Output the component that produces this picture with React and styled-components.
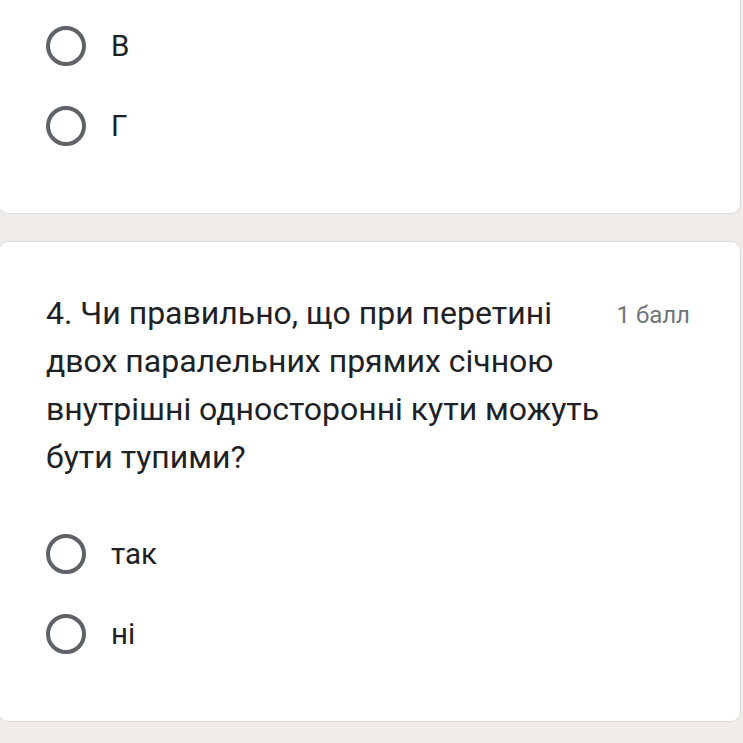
import React from 'react';
import styled, { createGlobalStyle } from 'styled-components';

const GlobalStyle = createGlobalStyle`
  html, body {
    margin: 0;
    padding: 0;
    background: #f0ede8;
    font-family: Roboto, 'Noto Sans', Arial, sans-serif;
    color: #202124;
  }
`;

const Page = styled.div`
  width: 743px;
  height: 743px;
  overflow: hidden;
  display: flex;
  flex-direction: column;
  gap: 27px;
`;

const Card = styled.div`
  margin-left: -2px;
  width: 743px;
  box-sizing: border-box;
  background: #fff;
  border: 1px solid #dadce0;
  border-top: ${(p) => (p.$cut ? 'none' : '1px solid #dadce0')};
  border-radius: ${(p) => (p.$cut ? '0 0 10px 10px' : '10px')};
  padding: ${(p) => (p.$cut ? '6px 50px 47px 47px' : '47px 50px 47px 47px')};
`;

const Header = styled.div`
  display: flex;
  align-items: flex-start;
  justify-content: space-between;
  margin-bottom: 33px;
`;

const Question = styled.div`
  width: 560px;
  font-size: 32px;
  line-height: 48px;
  color: #202124;
`;

const Points = styled.div`
  font-size: 24px;
  line-height: 48px;
  color: #70757a;
  white-space: nowrap;
  padding-top: 2px;
`;

const Option = styled.label`
  display: flex;
  align-items: center;
  height: 80px;
  gap: 25px;
`;

const Radio = styled.span`
  width: 40px;
  height: 40px;
  box-sizing: border-box;
  border: 4px solid #5f6368;
  border-radius: 50%;
  flex-shrink: 0;
`;

const Label = styled.span`
  font-size: 29.5px;
  color: #202124;
`;

const Choice = ({ text }) => (
  <Option>
    <Radio />
    <Label>{text}</Label>
  </Option>
);

export default function App() {
  return (
    <>
      <GlobalStyle />
      <Page>
        <Card $cut>
          <Choice text='В' />
          <Choice text='Г' />
        </Card>
        <Card>
          <Header>
            <Question>
              4. Чи правильно, що при перетині двох паралельних прямих січною
              внутрішні односторонні кути можуть бути тупими?
            </Question>
            <Points>1 балл</Points>
          </Header>
          <Choice text='так' />
          <Choice text='ні' />
        </Card>
      </Page>
    </>
  );
}
